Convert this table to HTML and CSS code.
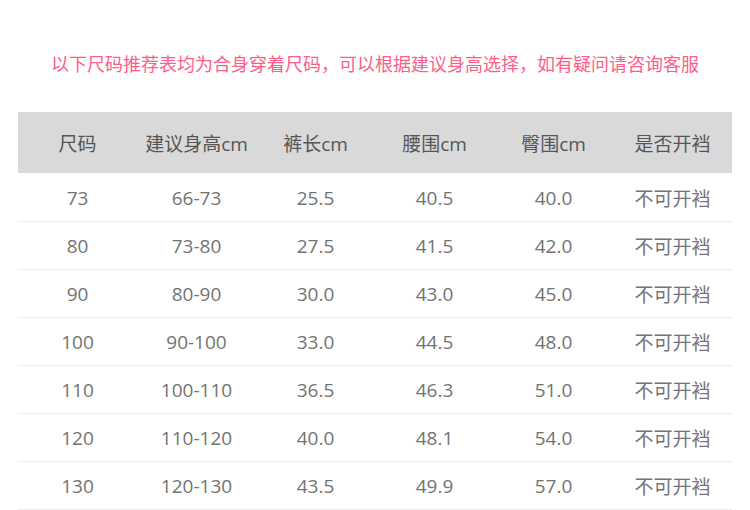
FILE: index.html
```html
<!DOCTYPE html>
<html lang="zh">
<head>
<meta charset="utf-8">
<link rel="stylesheet" href="styles.css">
</head>
<body>
<div class="page">
  <p class="note">以下尺码推荐表均为合身穿着尺码，可以根据建议身高选择，如有疑问请咨询客服</p>
  <div class="size-table">
    <div class="row head"><span>尺码</span><span>建议身高cm</span><span>裤长cm</span><span>腰围cm</span><span>臀围cm</span><span>是否开裆</span></div>
    <div class="row"><span>73</span><span>66-73</span><span>25.5</span><span>40.5</span><span>40.0</span><span>不可开裆</span></div>
    <div class="row"><span>80</span><span>73-80</span><span>27.5</span><span>41.5</span><span>42.0</span><span>不可开裆</span></div>
    <div class="row"><span>90</span><span>80-90</span><span>30.0</span><span>43.0</span><span>45.0</span><span>不可开裆</span></div>
    <div class="row"><span>100</span><span>90-100</span><span>33.0</span><span>44.5</span><span>48.0</span><span>不可开裆</span></div>
    <div class="row"><span>110</span><span>100-110</span><span>36.5</span><span>46.3</span><span>51.0</span><span>不可开裆</span></div>
    <div class="row"><span>120</span><span>110-120</span><span>40.0</span><span>48.1</span><span>54.0</span><span>不可开裆</span></div>
    <div class="row"><span>130</span><span>120-130</span><span>43.5</span><span>49.9</span><span>57.0</span><span>不可开裆</span></div>
  </div>
</div>
</body>
</html>
```

FILE: styles.css
```css
html, body {
  margin: 0;
  padding: 0;
  background: #fff;
}
body {
  font-family: "Open Sans", "Noto Sans CJK SC", sans-serif;
}
.page {
  width: 750px;
  padding: 0 18px;
  box-sizing: border-box;
}
.note {
  margin: 0;
  padding-top: 50px;
  height: 62px;
  box-sizing: border-box;
  line-height: 26px;
  text-align: center;
  font-family: "Noto Sans CJK SC", sans-serif;
  font-size: 18px;
  color: #ff5d89;
  white-space: nowrap;
}
.size-table {
  margin-top: 50px;
  width: 714px;
  display: flex;
  flex-direction: column;
}
.row {
  display: grid;
  grid-template-columns: repeat(6, 1fr);
  height: 48px;
  box-sizing: border-box;
  border-bottom: 1px solid #ededed;
  align-items: center;
  text-align: center;
  font-size: 19px;
  color: #737373;
}
.row.head {
  height: 61px;
  margin-bottom: 1px;
  background: #d9d9d9;
  border-bottom: none;
  color: #555;
}
```
